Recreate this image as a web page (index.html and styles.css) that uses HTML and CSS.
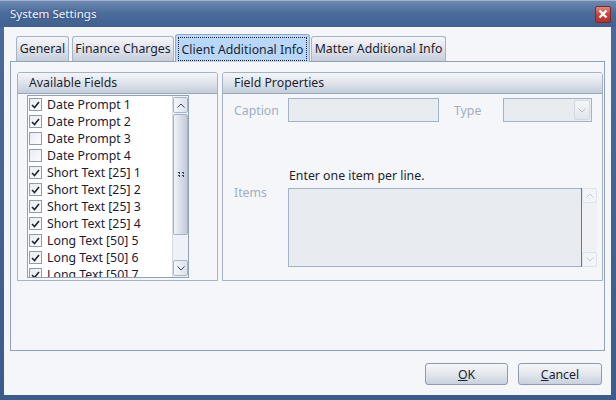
FILE: index.html
```html
<!DOCTYPE html>
<html lang="en">
<head>
  <meta charset="UTF-8" />
  <title>System Settings</title>
  <link rel="stylesheet" href="styles.css">
</head>
<body>
  <div class="window">
    <div class="titlebar">
      <span class="title">System Settings</span>
      <span class="close">
        <svg width="10" height="10" viewBox="0 0 10 10"><path d="M1.5 1.5 L8.5 8.5 M8.5 1.5 L1.5 8.5" stroke="#fff" stroke-width="2.4"/></svg>
      </span>
    </div>

    <div class="client">
      <div class="tabs">
        <div class="tab tab-general">General</div>
        <div class="tab tab-finance">Finance Charges</div>
        <div class="tab tab-client selected"><span class="focus">Client Additional Info</span></div>
        <div class="tab tab-matter">Matter Additional Info</div>
      </div>

      <div class="panel">
        <div class="group group-fields">
          <div class="group-head">Available Fields</div>
          <div class="listbox">
            <div class="items" id="items"></div>
            <div class="vscroll">
              <div class="sb-btn">
                <svg width="8" height="5" viewBox="0 0 8 5"><path d="M0.5 4.5 L4 1 L7.5 4.5" fill="none" stroke="#3c4454" stroke-width="1"/></svg>
              </div>
              <div class="sb-thumb">
                <svg width="6" height="5" viewBox="0 0 6 5"><path d="M0 0h2v1H0zM4 0h2v1H4zM0 3h2v1H0zM4 3h2v1H4zM1 1h1v1H1zM5 1h1v1H5zM1 4h1v1H1zM5 4h1v1H5z" fill="#3a4150"/></svg>
              </div>
              <div class="sb-track"></div>
              <div class="sb-btn">
                <svg width="8" height="5" viewBox="0 0 8 5"><path d="M0.5 0.5 L4 4 L7.5 0.5" fill="none" stroke="#3c4454" stroke-width="1"/></svg>
              </div>
            </div>
          </div>
        </div>

        <div class="group group-props">
          <div class="group-head">Field Properties</div>
          <div class="props">
            <div class="row">
              <span class="label">Caption</span>
              <div class="input caption"></div>
              <span class="label type-label">Type</span>
              <div class="input combo">
                <span class="drop">
                  <svg width="8" height="5" viewBox="0 0 8 5"><path d="M0.5 0.5 L4 4 L7.5 0.5" fill="none" stroke="#b4bdcb" stroke-width="1"/></svg>
                </span>
              </div>
            </div>
            <div class="hint">Enter one item per line.</div>
            <div class="row row-items">
              <span class="label items-label">Items</span>
              <div class="input memo"></div>
              <div class="vscroll off">
                <div class="sb-btn">
                  <svg width="8" height="5" viewBox="0 0 8 5"><path d="M0.5 4.5 L4 1 L7.5 4.5" fill="none" stroke="#c2cad6" stroke-width="1"/></svg>
                </div>
                <div class="sb-track"></div>
                <div class="sb-btn">
                  <svg width="8" height="5" viewBox="0 0 8 5"><path d="M0.5 0.5 L4 4 L7.5 0.5" fill="none" stroke="#c2cad6" stroke-width="1"/></svg>
                </div>
              </div>
            </div>
          </div>
        </div>
      </div>

      <div class="buttons">
        <button class="btn btn-ok"><u>O</u>K</button>
        <button class="btn btn-cancel"><u>C</u>ancel</button>
      </div>
    </div>
  </div>

  <script>
    const fields = [
      ['Date Prompt 1', true],
      ['Date Prompt 2', true],
      ['Date Prompt 3', false],
      ['Date Prompt 4', false],
      ['Short Text [25] 1', true],
      ['Short Text [25] 2', true],
      ['Short Text [25] 3', true],
      ['Short Text [25] 4', true],
      ['Long Text [50] 5', true],
      ['Long Text [50] 6', true],
      ['Long Text [50] 7', true]
    ];

    const tick = '<svg width="9" height="8" viewBox="0 0 9 8"><path d="M1 4 L3.5 6.5 L8 1" fill="none" stroke="#1f2430" stroke-width="1.6"/></svg>';

    const list = document.getElementById('items');
    fields.forEach(([name, on]) => {
      const row = document.createElement('div');
      row.className = 'item';
      row.innerHTML = '<span class="check">' + (on ? tick : '') + '</span><span class="name">' + name + '</span>';
      list.appendChild(row);
    });
  </script>
</body>
</html>
```

FILE: styles.css
```css
* {
  box-sizing: border-box;
}

body {
  margin: 0;
  font-family: 'Noto Sans', 'Open Sans', sans-serif;
  font-size: 12.3px;
  color: #1b1f2e;
}

.window {
  width: 616px;
  height: 400px;
  display: flex;
  flex-direction: column;
  background: linear-gradient(#4a6b9b, #3b5c8b);
}

/* title bar */
.titlebar {
  height: 27px;
  display: flex;
  align-items: center;
  justify-content: space-between;
  padding: 0 5px 2px 10px;
  background: linear-gradient(#6d89b1, #4c6d9c 45%, #3f6191);
  border-top: 1px solid #9fb2cc;
}

.title {
  color: #f3f6fb;
  font-size: 11.6px;
  text-shadow: 0 0 3px rgba(20, 40, 80, 0.6);
}

.close {
  width: 16px;
  height: 17px;
  display: flex;
  align-items: center;
  justify-content: center;
  background: linear-gradient(#e3887d, #c9433a 50%, #b8302a);
  border: 1px solid #7a2a28;
  border-radius: 2px;
  margin-top: 2px;
}

/* client area */
.client {
  flex: 1;
  margin: 0 5px 5px 4px;
  padding: 7px 6px 0 6px;
  background: #f4f6f9;
  display: flex;
  flex-direction: column;
}

.tabs {
  height: 27px;
  display: flex;
  align-items: flex-end;
  position: relative;
  z-index: 1;
}

.tab {
  height: 25px;
  display: flex;
  align-items: center;
  justify-content: center;
  border: 1px solid #a5b3c7;
  border-bottom: none;
  border-radius: 3px 3px 0 0;
  background: linear-gradient(#f5f6f9, #dde2ea 55%, #c6cedb);
  color: #1b1f2e;
  padding-bottom: 1px;
  white-space: nowrap;
}

.tab-general { width: 53px; margin-left: 6px; }
.tab-finance { width: 102px; margin-left: 3px; }
.tab-client { width: 135px; margin-left: 1px; }
.tab-matter { width: 135px; margin-left: 1px; }

.tab.selected {
  height: 28px;
  margin-bottom: -1px;
  background: #b8d7f9;
  border-color: #8eabcf;
  padding: 2px 2px 1px;
  align-items: stretch;
}

.focus {
  flex: 1;
  display: flex;
  align-items: center;
  justify-content: center;
  border: 1px dotted #1b1f2e;
}

.panel {
  height: 290px;
  border: 1px solid #8fa2bd;
  background: #f4f6f9;
  display: flex;
  gap: 4px;
  padding: 10px 1px 0 6px;
}

/* group boxes */
.group {
  height: 209px;
  border: 1px solid #a3b2c7;
  border-radius: 3px 3px 0 0;
  display: flex;
  flex-direction: column;
}

.group-fields { width: 201px; }
.group-props { width: 381px; }

.group-head {
  height: 21px;
  line-height: 20px;
  padding-left: 11px;
  border-bottom: 1px solid #98a8bf;
  border-radius: 2px 2px 0 0;
  background: linear-gradient(#f3f5f8, #dfe4eb 50%, #c3ccd9);
  color: #1b1f2e;
}

/* list box */
.listbox {
  width: 162px;
  height: 183px;
  margin: 1px 0 0 9px;
  border: 1px solid #8fa2bd;
  background: #fff;
  display: flex;
  overflow: hidden;
}

.items {
  flex: 1;
  overflow: hidden;
}

.item {
  height: 17px;
  display: flex;
  align-items: center;
  white-space: nowrap;
}

.check {
  width: 13px;
  height: 13px;
  margin-left: 1px;
  margin-right: 5px;
  border: 1px solid #8e9bb0;
  background: linear-gradient(135deg, #e9ecf1, #fbfcfd);
  display: flex;
  align-items: center;
  justify-content: center;
}

.name {
  color: #1b1b33;
}

/* scroll bars */
.vscroll {
  width: 16px;
  display: flex;
  flex-direction: column;
  background: #eef1f5;
  border-left: 1px solid #d7dde6;
}

.sb-btn {
  height: 16px;
  margin: 1px 0;
  display: flex;
  align-items: center;
  justify-content: center;
  border: 1px solid #a9b6c8;
  border-radius: 2px;
  background: linear-gradient(90deg, #f5f7fa, #dbe1ea);
}

.sb-thumb {
  height: 121px;
  display: flex;
  align-items: center;
  justify-content: center;
  border: 1px solid #a6b3c6;
  border-radius: 2px;
  background: linear-gradient(90deg, #f1f3f7, #d3dae5 60%, #c4ccd9);
}

.sb-track {
  flex: 1;
}

.vscroll.off {
  height: 79px;
  border-left: 1px solid #6f7680;
  background: #eff1f4;
}

.vscroll.off .sb-btn {
  height: 15px;
  margin: 0;
  border-color: #dce2ea;
  background: #f2f4f7;
}

/* field properties */
.props {
  padding: 4px 0 0 11px;
}

.row {
  display: flex;
  align-items: center;
}

.label {
  width: 54px;
  color: #a3aec0;
}

.input {
  height: 24px;
  border: 1px solid #a2b2c8;
  background: #e8ebf0;
}

.caption { width: 151px; }

.type-label {
  width: 49px;
  margin-left: 15px;
}

.combo {
  width: 89px;
  display: flex;
  justify-content: flex-end;
  align-items: center;
  padding-right: 1px;
}

.drop {
  width: 16px;
  height: 20px;
  display: flex;
  align-items: center;
  justify-content: center;
  border: 1px solid #d3dae4;
  border-radius: 2px;
  background: linear-gradient(#f4f6f9, #e2e6ec);
}

.hint {
  margin: 46px 0 4px 55px;
  height: 16px;
  line-height: 16px;
  color: #1b1f2e;
}

.row-items {
  align-items: flex-start;
}

.items-label {
  margin-top: -4px;
}

.memo {
  width: 293px;
  height: 79px;
  border-right: none;
}

/* dialog buttons */
.buttons {
  display: flex;
  justify-content: flex-end;
  gap: 10px;
  margin-top: 12px;
  padding-right: 3px;
}

.btn {
  height: 22px;
  font-family: inherit;
  font-size: 12.3px;
  color: #1b1f2e;
  border: 1px solid #8d9cb3;
  border-radius: 3px;
  background: linear-gradient(#f6f7f9, #e3e7ed 50%, #c9d1dd);
  padding: 0;
}

.btn-ok { width: 83px; }
.btn-cancel { width: 84px; }
```
